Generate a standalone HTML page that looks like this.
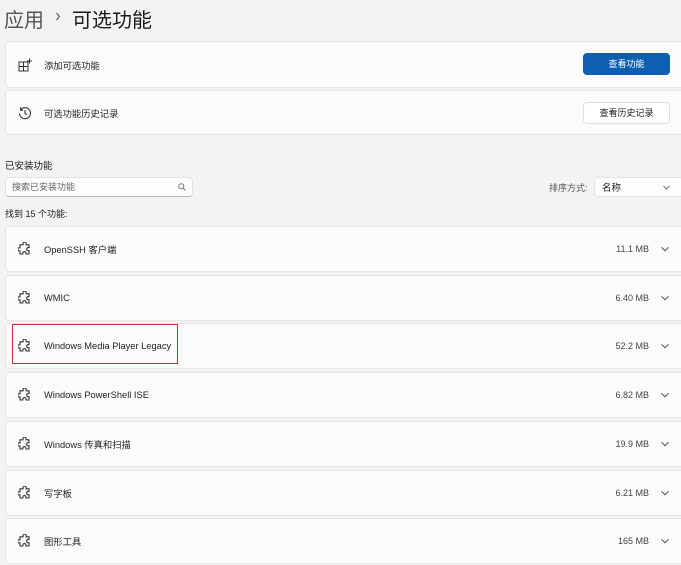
<!DOCTYPE html>
<html><head><meta charset="utf-8"><style>
*{margin:0;padding:0;box-sizing:border-box}
body{width:681px;height:565px;background:#f3f3f3;font-family:"Liberation Sans","Noto Sans CJK SC",sans-serif;color:#1b1b1b;position:relative;overflow:hidden;font-size:9.5px}
.a{position:absolute}
.card{position:absolute;left:5px;width:681px;background:#fbfbfb;border:1px solid #e5e5e5;border-radius:4px}
.lbl{position:absolute;left:38px;top:50%;transform:translateY(-50%);font-size:9.3px;color:#222}
.ic{position:absolute;left:12px;top:50%;transform:translateY(-50%)}
.sz{position:absolute;right:36px;top:50%;transform:translateY(-50%);font-size:9px;color:#444}
.chev{position:absolute;right:16px;top:50%;transform:translateY(-50%)}
</style></head><body>
<div class="a" style="left:4px;top:4px;font-size:20px;color:#555">应用</div>
<svg class="a" style="left:55px;top:12px" width="6" height="9" viewBox="0 0 6 9" fill="none" stroke="#555" stroke-width="1.1"><path d="M1.5 1l3 3.5-3 3.5"/></svg>
<div class="a" style="left:72px;top:4px;font-size:20px;color:#1b1b1b">可选功能</div>

<div class="card" style="top:41px;height:47px">
 <svg class="ic" width="14" height="14" viewBox="0 0 14 14" fill="none" stroke="#333" stroke-width="1"><rect x="1" y="4" width="9" height="9"/><path d="M5.5 4v9M1 8.5h9M11.5 0.5v5M9 3h5"/></svg>
 <div class="lbl">添加可选功能</div>
 <div class="a" style="left:577px;top:11px;width:87px;height:22px;background:#0f5fb0;border-radius:4px;color:#fff;font-size:9px;text-align:center;line-height:22px">查看功能</div>
</div>
<div class="card" style="top:90px;height:45px">
 <svg class="ic" width="14" height="14" viewBox="0 0 14 14" fill="none" stroke="#333" stroke-width="1.1"><path d="M2.5 4A5.5 5.5 0 1 1 1.5 7.5M2.5 1.5v2.7h2.7M7 4v3.5l2 1"/></svg>
 <div class="lbl">可选功能历史记录</div>
 <div class="a" style="left:577px;top:11px;width:87px;height:22px;background:#fff;border:1px solid #e0e0e0;border-radius:4px;font-size:9px;text-align:center;line-height:20px">查看历史记录</div>
</div>

<div class="a" style="left:5px;top:158px;font-size:9.5px">已安装功能</div>
<div class="a" style="left:5px;top:177px;width:188px;height:20px;background:#fdfdfd;border:1px solid #e3e3e3;border-bottom-color:#bbb;border-radius:4px;font-size:9px;color:#666;padding-left:6px;line-height:18px">搜索已安装功能
 <svg class="a" style="right:6px;top:5px" width="8" height="8" viewBox="0 0 8 8" fill="none" stroke="#777"><circle cx="3.3" cy="3.3" r="2.5"/><path d="M5 5l2.5 2.5"/></svg></div>
<div class="a" style="left:549px;top:181px;font-size:9px;color:#555">排序方式:</div>
<div class="a" style="left:594px;top:177px;width:90px;height:20px;background:#fdfdfd;border:1px solid #e3e3e3;border-radius:4px"></div>
<div class="a" style="left:602px;top:180px;font-size:9.5px">名称</div>
<svg class="a" style="left:663px;top:185px" width="7" height="5" viewBox="0 0 7 5" fill="none" stroke="#777"><path d="M.5 1l3 3 3-3"/></svg>
<div class="a" style="left:5px;top:207px;font-size:9px">找到 15 个功能:</div>

<svg width="0" height="0" style="position:absolute"><defs><symbol id="pz" viewBox="0 0 14 14"><path fill="none" stroke="#333" stroke-width="1.1" d="M5 1.5a1.6 1.6 0 0 1 3.2 0.3v1h2.8v2.8h-0.8a1.6 1.6 0 1 0 0 3.2h0.8v3.2H8v-0.8a1.6 1.6 0 1 0-3.2 0v0.8H2v-3H1.3a1.6 1.6 0 1 1 0-3.2H2V2.8h3z"/></symbol>
<symbol id="cv" viewBox="0 0 8 5"><path fill="none" stroke="#444" stroke-width="1" d="M.5 .8l3.5 3.4 3.5-3.4"/></symbol></defs></svg>

<div class="card" style="top:226px;height:46px"><svg class="ic" width="14" height="14"><use href="#pz"/></svg><div class="lbl">OpenSSH 客户端</div><div class="sz">11.1 MB</div><svg class="chev" width="8" height="5"><use href="#cv"/></svg></div>
<div class="card" style="top:275px;height:46px"><svg class="ic" width="14" height="14"><use href="#pz"/></svg><div class="lbl">WMIC</div><div class="sz">6.40 MB</div><svg class="chev" width="8" height="5"><use href="#cv"/></svg></div>
<div class="card" style="top:323px;height:46px"><svg class="ic" width="14" height="14"><use href="#pz"/></svg><div class="lbl">Windows Media Player Legacy</div><div class="sz">52.2 MB</div><svg class="chev" width="8" height="5"><use href="#cv"/></svg></div>
<div class="a" style="left:12px;top:324px;width:166px;height:40px;border:1.5px solid #c9303a"></div>
<div class="card" style="top:372px;height:46px"><svg class="ic" width="14" height="14"><use href="#pz"/></svg><div class="lbl">Windows PowerShell ISE</div><div class="sz">6.82 MB</div><svg class="chev" width="8" height="5"><use href="#cv"/></svg></div>
<div class="card" style="top:421px;height:46px"><svg class="ic" width="14" height="14"><use href="#pz"/></svg><div class="lbl">Windows 传真和扫描</div><div class="sz">19.9 MB</div><svg class="chev" width="8" height="5"><use href="#cv"/></svg></div>
<div class="card" style="top:470px;height:46px"><svg class="ic" width="14" height="14"><use href="#pz"/></svg><div class="lbl">写字板</div><div class="sz">6.21 MB</div><svg class="chev" width="8" height="5"><use href="#cv"/></svg></div>
<div class="card" style="top:518px;height:46px"><svg class="ic" width="14" height="14"><use href="#pz"/></svg><div class="lbl">图形工具</div><div class="sz">165 MB</div><svg class="chev" width="8" height="5"><use href="#cv"/></svg></div>
</body></html>
